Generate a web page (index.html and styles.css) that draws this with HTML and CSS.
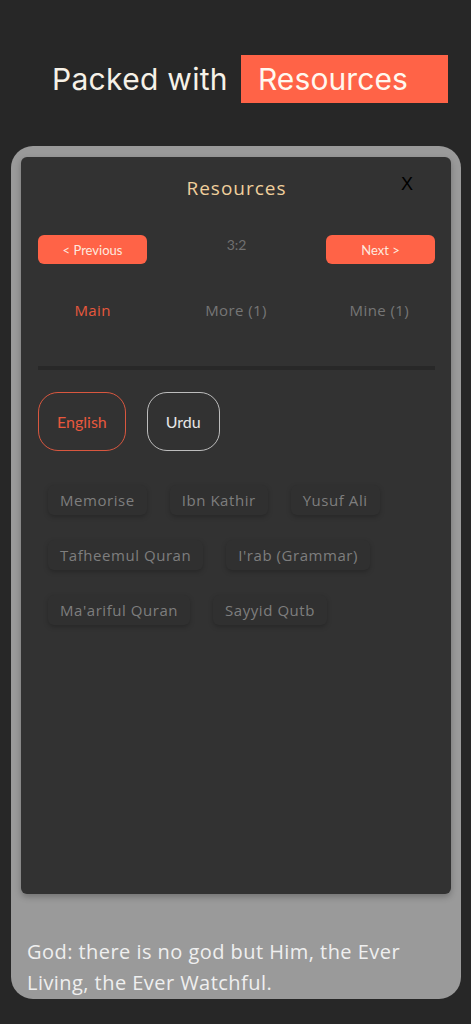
FILE: index.html
```html
<!DOCTYPE html>
<html lang="en">
<head>
<meta charset="utf-8">
<title>Packed with Resources</title>
<link rel="stylesheet" href="styles.css">
</head>
<body>
<header class="hero">
  <span class="hero-text">Packed with</span>
  <span class="hero-tag">Resources</span>
</header>
<main class="card">
  <section class="panel">
    <div class="panel-head">
      <h1 class="panel-title">Resources</h1>
      <span class="close">X</span>
    </div>
    <div class="nav-row">
      <button class="nav-btn">&lt; Previous</button>
      <span class="ref">3:2</span>
      <button class="nav-btn">Next &gt;</button>
    </div>
    <div class="tabs">
      <span class="tab active">Main</span>
      <span class="tab">More (1)</span>
      <span class="tab">Mine (1)</span>
    </div>
    <div class="divider"></div>
    <div class="langs">
      <span class="lang active">English</span>
      <span class="lang">Urdu</span>
    </div>
    <div class="chips">
      <span class="chip">Memorise</span>
      <span class="chip">Ibn Kathir</span>
      <span class="chip">Yusuf Ali</span>
      <span class="chip">Tafheemul Quran</span>
      <span class="chip">I'rab (Grammar)</span>
      <span class="chip">Ma'ariful Quran</span>
      <span class="chip">Sayyid Qutb</span>
    </div>
  </section>
  <p class="verse">God: there is no god but Him, the Ever Living, the Ever Watchful.</p>
</main>
</body>
</html>
```
FILE: styles.css
```css
html, body {
  margin: 0;
  padding: 0;
  background: #272727;
}
body {
  width: 471px;
  height: 1024px;
  overflow: hidden;
  font-family: "Open Sans", sans-serif;
}
.hero {
  display: flex;
  align-items: center;
  padding: 55px 0 0 52px;
  height: 48px;
  gap: 13px;
}
.hero-text {
  font-family: Inter, "Noto Sans", sans-serif;
  font-size: 30px;
  color: #f6f1e7;
  letter-spacing: 0.3px;
}
.hero-tag {
  display: flex;
  align-items: center;
  height: 48px;
  width: 190px;
  padding-left: 17px;
  background: #ff6347;
  color: #fff8ef;
  font-family: Inter, "Noto Sans", sans-serif;
  font-size: 30px;
  letter-spacing: 0.1px;
}
.card {
  margin: 43px 10px 0 11px;
  height: 853px;
  background: #9a9a9a;
  border-radius: 22px;
  padding: 11px 10px 0 10px;
  box-sizing: border-box;
}
.panel {
  position: relative;
  height: 737px;
  background: #323232;
  border-radius: 6px;
  box-shadow: 0 3px 6px rgba(0,0,0,0.25);
  padding: 0 16px 0 17px;
  box-sizing: border-box;
}
.panel-head {
  padding-top: 20px;
  height: 22px;
  display: flex;
  justify-content: center;
}
.panel-title {
  margin: 0;
  font-family: "Open Sans", sans-serif;
  font-weight: 500;
  font-size: 19px;
  letter-spacing: 1px;
  line-height: 22px;
  color: #f0cf9c;
}
.close {
  position: absolute;
  top: 17px;
  right: 38px;
  font-family: "Liberation Sans", sans-serif;
  font-size: 18px;
  color: #000;
}
.nav-row {
  display: flex;
  justify-content: space-between;
  align-items: flex-start;
  margin-top: 36px;
}
.nav-btn {
  width: 109px;
  height: 29px;
  border: none;
  border-radius: 6px;
  background: #ff6347;
  color: #fde9df;
  font-family: Lato, sans-serif;
  font-size: 13px;
  padding: 0;
}
.ref {
  margin-top: 2px;
  font-family: Lato, sans-serif;
  font-size: 14px;
  color: #707070;
  line-height: 16px;
}
.tabs {
  display: grid;
  grid-template-columns: repeat(3, 1fr);
  margin: 36px -16px 0 -17px;
  text-align: center;
}
.tab {
  font-family: "Open Sans", sans-serif;
  font-size: 15px;
  letter-spacing: 0.4px;
  line-height: 20px;
  color: #767676;
}
.tab.active {
  color: #e8583d;
}
.divider {
  margin-top: 46px;
  height: 4px;
  background: #282828;
}
.langs {
  display: flex;
  gap: 21px;
  margin-top: 22px;
}
.lang {
  display: flex;
  align-items: center;
  justify-content: center;
  height: 57px;
  padding: 0 18px;
  border: 1px solid #bdbdbd;
  border-radius: 20px;
  font-family: Lato, sans-serif;
  font-size: 16px;
  color: #e6e6e6;
}
.lang.active {
  border-color: #d9573f;
  color: #e8583d;
}
.chips {
  display: flex;
  flex-wrap: wrap;
  gap: 25px 23px;
  margin: 34px 0 0 10px;
}
.chip {
  display: flex;
  align-items: center;
  height: 30px;
  padding: 0 12px;
  background: #303030;
  border-radius: 6px;
  box-shadow: 0 2px 5px rgba(0,0,0,0.22);
  font-family: "Open Sans", sans-serif;
  font-size: 15px;
  letter-spacing: 0.55px;
  color: #7e7e7e;
}
.verse {
  margin: 42px 0 0 6px;
  padding-right: 20px;
  font-family: "Open Sans", sans-serif;
  font-size: 20px;
  letter-spacing: 0.45px;
  line-height: 31px;
  color: #efefef;
}
```
